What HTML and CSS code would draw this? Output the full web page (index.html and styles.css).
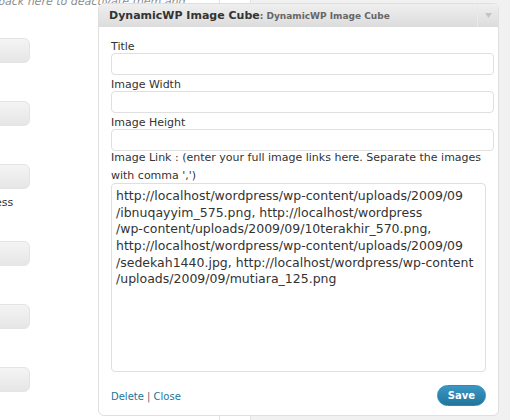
FILE: index.html
```html
<!DOCTYPE html>
<html>
<head>
<meta charset="utf-8">
<link rel="stylesheet" href="styles.css">
</head>
<body>
<div class="page">
  <div class="col-left">
    <p class="hint">back here to deactivate them and</p>
    <div class="items">
      <div class="item"><div class="bar"></div></div>
      <div class="item"><div class="bar"></div></div>
      <div class="item"><div class="bar"></div><p class="desc">ess</p></div>
      <div class="item"><div class="bar"></div></div>
      <div class="item"><div class="bar"></div></div>
      <div class="item"><div class="bar"></div></div>
    </div>
  </div>
  <div class="col-mid"></div>
  <div class="col-right"></div>
</div>

<div class="widget">
  <div class="widget-top">
    <div class="widget-title">DynamicWP Image Cube<span class="in-title">: DynamicWP Image Cube</span></div>
    <div class="widget-action">
      <svg width="7" height="5" viewBox="0 0 7 5"><polygon points="0,0 7,0 3.5,5" fill="#c4c4c4"/></svg>
    </div>
  </div>
  <div class="widget-inside">
    <label class="lbl">Title</label>
    <input class="text-field" type="text">
    <label class="lbl">Image Width</label>
    <input class="text-field" type="text">
    <label class="lbl">Image Height</label>
    <input class="text-field" type="text">
    <label class="lbl link-label">Image Link : (enter your full image links here. Separate the images with comma ',')</label>
    <textarea class="links" wrap="off">http://localhost/wordpress/wp-content/uploads/2009/09
/ibnuqayyim_575.png, http://localhost/wordpress
/wp-content/uploads/2009/09/10terakhir_570.png,
http://localhost/wordpress/wp-content/uploads/2009/09
/sedekah1440.jpg, http://localhost/wordpress/wp-content
/uploads/2009/09/mutiara_125.png</textarea>
    <div class="widget-control">
      <div class="control-links"><a href="#">Delete</a> <span class="sep">|</span> <a href="#">Close</a></div>
      <button class="button-primary" type="button">Save</button>
    </div>
  </div>
</div>
</body>
</html>
```

FILE: styles.css
```css
html, body {
  margin: 0;
  padding: 0;
}
body {
  width: 510px;
  height: 420px;
  overflow: hidden;
  position: relative;
  background: #fff;
  font-family: "DejaVu Sans", Verdana, sans-serif;
}
.page {
  display: flex;
  height: 420px;
}
.col-left {
  width: 219px;
}
.col-mid {
  width: 32px;
  box-sizing: border-box;
  border-left: 1px solid #e3e3e3;
  border-right: 1px solid #e3e3e3;
}
.col-right {
  flex: 1;
  background: #f1f1f1;
}
.hint {
  margin: -5px 0 0 -2px;
  font-size: 11px;
  line-height: 13px;
  font-style: italic;
  color: #8c8c8c;
  white-space: nowrap;
}
.items {
  display: flex;
  flex-direction: column;
  gap: 38px;
  margin-top: 30px;
}
.bar {
  width: 50px;
  margin-left: -20px;
  height: 25px;
  box-sizing: border-box;
  border: 1px solid #e4e4e4;
  border-radius: 6px;
  background: linear-gradient(#f4f4f4, #e6e6e6);
}
.desc {
  margin: 7px 0 -6px -5px;
  font-size: 11px;
  line-height: 13px;
  color: #333;
}
.widget {
  position: absolute;
  left: 98px;
  top: 3px;
  width: 401px;
  height: 413px;
  box-sizing: border-box;
  border: 1px solid #dfdfdf;
  border-radius: 6px;
  background: #fff;
  display: flex;
  flex-direction: column;
  overflow: hidden;
}
.widget-top {
  display: flex;
  height: 23px;
  background: linear-gradient(#efefef, #dcdcdc);
}
.widget-title {
  flex: 1;
  padding-left: 10px;
  font-size: 11px;
  line-height: 24px;
  font-weight: bold;
  color: #333;
  white-space: nowrap;
  overflow: hidden;
}
.in-title {
  font-size: 9px;
  color: #666;
}
.widget-action {
  width: 21px;
  box-sizing: border-box;
  border-left: 1px solid #eaeaea;
  display: flex;
  align-items: center;
  justify-content: center;
}
.widget-action svg {
  display: block;
}
.widget-inside {
  flex: 1;
  display: flex;
  flex-direction: column;
  padding: 13px 4px 9px 12px;
}
.lbl {
  display: block;
  font-size: 11px;
  line-height: 13px;
  color: #333;
}
.text-field {
  display: block;
  width: 100%;
  height: 22px;
  box-sizing: border-box;
  margin: 0 0 3px;
  padding: 0 4px;
  border: 1px solid #dfdfdf;
  border-radius: 4px;
  background: #fff;
  font-family: "DejaVu Sans", sans-serif;
  font-size: 11px;
  outline: none;
}
.link-label {
  margin: -5px 0 -2px;
  line-height: 18px;
}
.links {
  display: block;
  width: 375px;
  height: 189px;
  box-sizing: border-box;
  margin: 0;
  padding: 4px 4px;
  border: 1px solid #dfdfdf;
  border-radius: 4px;
  background: #fff;
  color: #333;
  font-family: "DejaVu Sans", sans-serif;
  font-size: 12.5px;
  line-height: 16.67px;
  resize: none;
  overflow: hidden;
  white-space: pre;
  outline: none;
}
.widget-control {
  margin-top: auto;
  display: flex;
  justify-content: space-between;
  align-items: center;
  padding-right: 8px;
}
.control-links {
  font-size: 10px;
  line-height: 12px;
  color: #666;
  padding-top: 3px;
}
.control-links a {
  color: #21759b;
  text-decoration: none;
}
.button-primary {
  width: 49px;
  height: 21px;
  padding: 0;
  border: 1px solid #298cba;
  border-radius: 11px;
  background: linear-gradient(#3a96c4, #21759b);
  color: #fff;
  font-family: "DejaVu Sans", sans-serif;
  font-size: 10px;
  font-weight: bold;
  line-height: 19px;
}
```
